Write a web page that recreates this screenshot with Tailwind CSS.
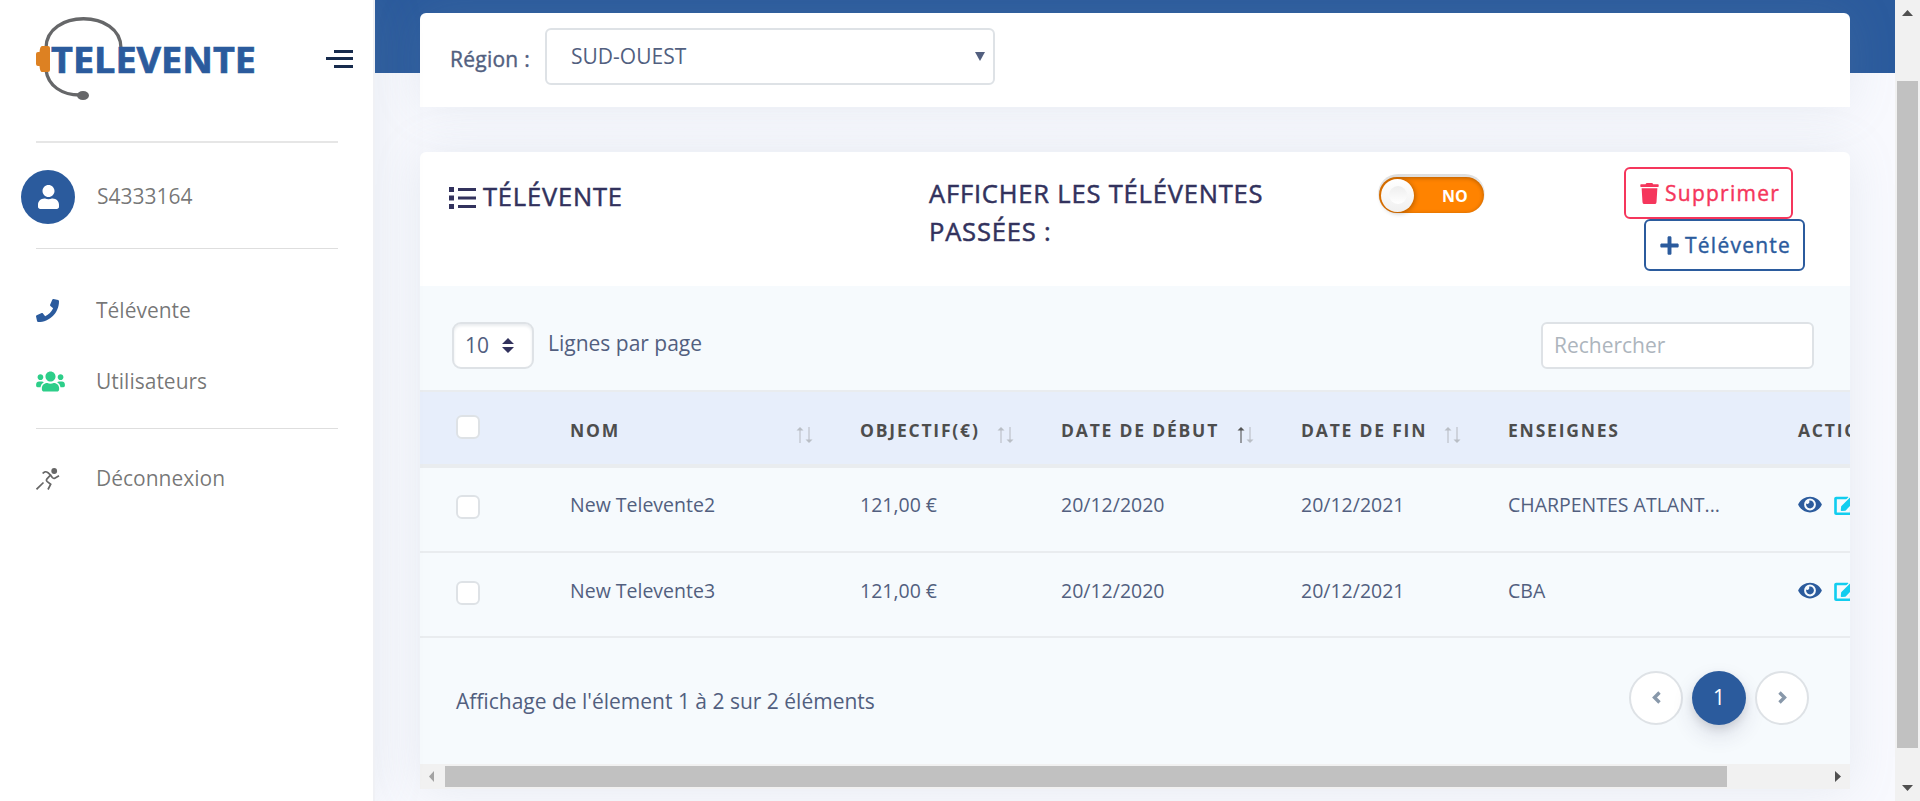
<!DOCTYPE html>
<html lang="fr">
<head>
<meta charset="utf-8">
<title>Télévente</title>
<script src="https://cdn.jsdelivr.net/npm/@tailwindcss/browser@4"></script>
</head>
<body class="h-[801px] w-[1920px] overflow-hidden bg-[#f8f9fe] font-['Open_Sans',sans-serif] text-[#525f7f]">
<svg class="hidden">
  <symbol id="eye" viewBox="0 0 576 512"><path d="M572.52 241.4C518.29 135.59 410.93 64 288 64S57.68 135.64 3.48 241.41a32.35 32.35 0 0 0 0 29.19C57.71 376.41 165.07 448 288 448s230.32-71.64 284.52-177.41a32.35 32.35 0 0 0 0-29.19zM288 400a144 144 0 1 1 144-144 143.93 143.93 0 0 1-144 144zm0-240a95.31 95.31 0 0 0-25.31 3.79 47.85 47.85 0 0 1-66.9 66.9A95.78 95.78 0 1 0 288 160z"/></symbol>
  <symbol id="edit" viewBox="0 0 576 512"><path d="M402.6 83.2l90.2 90.2c3.8 3.8 3.8 10 0 13.8L274.4 405.6l-92.8 10.3c-12.4 1.4-22.9-9.1-21.5-21.5l10.3-92.8L388.8 83.2c3.8-3.8 10-3.8 13.8 0zm162-22.9l-48.8-48.8c-15.2-15.2-39.9-15.2-55.2 0l-35.4 35.4c-3.8 3.8-3.8 10 0 13.8l90.2 90.2c3.8 3.8 10 3.8 13.8 0l35.4-35.4c15.2-15.3 15.2-40 0-55.2zM384 346.2V448H64V128h229.800c3.200 0 6.200-1.300 8.500-3.500l40-40c7.600-7.600 2.200-20.500-8.500-20.500H48C21.500 64 0 85.500 0 112v352c0 26.500 21.500 48 48 48h352c26.500 0 48-21.500 48-48V306.200c0-10.700-12.900-16-20.500-8.500l-40 40c-2.200 2.300-3.500 5.300-3.500 8.500z"/></symbol>
  <symbol id="up" viewBox="0 0 8 16"><path d="M3 2h2v14H3z" opacity=".55"/><path d="M4 0l3.500 3.500h-7z"/></symbol>
  <symbol id="down" viewBox="0 0 8 16"><path d="M3 0h2v14H3z" opacity=".55"/><path d="M4 16l3.500-3.500h-7z"/></symbol>
</svg>
<div class="flex h-full">
  <aside class="relative z-10 flex h-full w-[375px] shrink-0 flex-col border-r-2 border-[#f0f1f5] bg-white text-[21px] text-black/55 shadow-[0_0_48px_rgba(136,152,170,.15)]">
    <div class="flex h-[141px] items-start pl-9">
      <svg class="mt-[16px]" width="222" height="86" viewBox="36 16 222 86">
        <path d="M46 48C46 9 121 9 121 48M46 70C48 86 62 95 80 95" fill="none" stroke="#666769" stroke-width="3.300"/>
        <ellipse cx="83" cy="95.500" rx="6" ry="4.500" fill="#666769"/>
        <path d="M42 46h6q2 0 2 2v22q0 2-2 2h-6q-2 0-2.500-6h-1.500q-2 0-2-2V54q0-2 2-2h1.500q.5-6 2.500-6z" fill="#dd8122"/>
        <text x="51" y="72.500" textLength="205" lengthAdjust="spacingAndGlyphs" font-family="Open Sans" font-weight="700" font-size="36.500" fill="#2b5b9d" stroke="#2b5b9d" stroke-width=".7">TELEVENTE</text>
      </svg>
      <div class="mt-[50px] ml-[68px] flex w-[27px] flex-col items-end gap-[4px]">
        <i class="h-[3px] w-[19px] bg-[#172b4d]"></i><i class="h-[3px] w-[27px] bg-[#172b4d]"></i><i class="mt-[1px] h-[3px] w-[19px] bg-[#172b4d]"></i>
      </div>
    </div>
    <div class="mx-9 h-[2px] w-[302px] bg-[#e6e6e6]"></div>
    <div class="flex h-[105px] items-center pl-[21px]">
      <span class="mt-[3px] flex size-[54px] items-center justify-center rounded-full bg-[#2b5b9d]"><svg class="h-6 w-[21px] fill-white" viewBox="0 0 448 512"><path d="M224 256c70.700 0 128-57.300 128-128S294.700 0 224 0 96 57.300 96 128s57.300 128 128 128zm89.600 32h-16.700c-22.200 10.200-46.900 16-72.900 16s-50.600-5.800-72.900-16h-16.700C60.200 288 0 348.200 0 422.400V464c0 26.500 21.500 48 48 48h352c26.500 0 48-21.500 48-48v-41.600c0-74.200-60.200-134.400-134.400-134.400z"/></svg></span>
      <span class="mt-[2px] ml-[22px]">S4333164</span>
    </div>
    <div class="mx-9 h-px w-[302px] bg-[#dedede]"></div>
    <nav class="flex flex-col pt-[26px]">
      <a class="flex h-[71px] items-center pl-9"><svg class="size-[23px] fill-[#2b5b9d]" viewBox="0 0 512 512"><path d="M493.400 24.600l-104-24c-11.300-2.600-22.900 3.300-27.500 13.900l-48 112c-4.200 9.800-1.400 21.300 6.900 28l60.600 49.600c-36 76.700-98.900 140.500-177.200 177.200l-49.600-60.600c-6.800-8.300-18.200-11.100-28-6.900l-112 48C3.900 366.500-2 378.100.6 389.400l24 104C27.100 504.200 36.700 512 48 512c256.100 0 464-207.500 464-464 0-11.200-7.700-20.900-18.600-23.400z"/></svg><span class="ml-[37px]">Télévente</span></a>
      <a class="flex h-[71px] items-center pl-9"><svg class="h-[23px] w-[29px] fill-[#2dce89]" viewBox="0 0 640 512"><path d="M96 224c35.300 0 64-28.700 64-64s-28.700-64-64-64-64 28.700-64 64 28.700 64 64 64zm448 0c35.300 0 64-28.700 64-64s-28.700-64-64-64-64 28.700-64 64 28.700 64 64 64zm32 32h-64c-17.600 0-33.500 7.100-45.100 18.600 40.300 22.100 68.900 62 75.100 109.400h66c17.700 0 32-14.300 32-32v-32c0-35.300-28.700-64-64-64zm-256 0c61.900 0 112-50.100 112-112S381.900 32 320 32 208 82.100 208 144s50.100 112 112 112zm76.800 32h-8.300c-20.800 10-43.900 16-68.500 16s-47.600-6-68.500-16h-8.300C179.600 288 128 339.600 128 403.200V432c0 26.500 21.500 48 48 48h288c26.500 0 48-21.500 48-48v-28.800c0-63.600-51.600-115.200-115.200-115.200zm-223.700-13.400C161.500 263.100 145.600 256 128 256H64c-35.300 0-64 28.700-64 64v32c0 17.700 14.300 32 32 32h65.900c6.300-47.400 34.900-87.300 75.200-109.400z"/></svg><span class="ml-[31px]">Utilisateurs</span></a>
    </nav>
    <div class="mx-9 mt-[11px] h-px w-[302px] bg-[#dedede]"></div>
    <a class="mt-[14px] flex h-[72px] items-center pl-9"><svg class="h-[22px] w-[24px]" viewBox="0 0 24 22"><circle cx="18.200" cy="3" r="2.900" fill="#666"/><path d="M.5 21.300L7.500 14.500M6.700 5.500C8 3.500 10 3.200 12 4.700L14.500 7L11 10.800Q9.800 12.500 11.300 13.700L14.700 16.200L12 21.500M14.500 7L16.300 9.500Q17.300 10.700 18.800 10.200L23 7.700" fill="none" stroke="#666" stroke-width="1.700"/></svg><span class="ml-[36px]">Déconnexion</span></a>
  </aside>

  <main class="relative flex min-w-0 flex-1 flex-col bg-linear-to-b from-[#2b5b9d] from-[73px] to-[#f8f9fe] to-[73px] pt-[13px] pl-[45px]">
    <section class="flex h-[94px] w-[1430px] shrink-0 items-start rounded-t-[6px] bg-white pl-[30px] shadow-[0_0_48px_rgba(136,152,170,.15)]">
      <label class="mt-[31px] w-[95px] text-[21px] leading-[30px] tracking-[.25px] [-webkit-text-stroke:.4px]">Région :</label>
      <div class="mt-[15px] flex h-[57px] w-[450px] items-center justify-between rounded-[6px] border-2 border-[#dee2e6] bg-white pr-[8px] pl-6 text-[21px]"><span>SUD-OUEST</span><svg class="h-[9px] w-[10px] fill-[#525f7f]" viewBox="0 0 10 9"><path d="M0 0h10L5 9z"/></svg></div>
    </section>

    <section class="mt-[45px] flex h-[637px] w-[1430px] shrink-0 flex-col overflow-hidden rounded-t-[6px] bg-white shadow-[0_0_48px_rgba(136,152,170,.15)]">
      <header class="flex h-[134px] shrink-0 text-[25.500px] leading-[38px] tracking-[.820px] text-[#32325d] [-webkit-text-stroke:.5px]">
        <div class="mt-[25px] flex w-[509px] items-start pl-[29px]"><svg class="mt-[10px] h-[22px] w-[27px] fill-[#32325d]" viewBox="0 0 27 22"><path d="M0 0h5v5H0zM0 8.500h5v5H0zM0 17h5v5H0zM9 1h18v3H9zM9 9.500h18v3H9zM9 18h18v3H9z" stroke="none"/></svg><h2 class="ml-[7px]">TÉLÉVENTE</h2></div>
        <h2 class="mt-[22px] w-[449px]">AFFICHER LES TÉLÉVENTES<br>PASSÉES :</h2>
        <div class="mt-[22px] flex h-[40px] w-[107px] items-center rounded-full bg-linear-to-b from-[#dedede] to-white px-px pt-[3px] pb-px tracking-normal [-webkit-text-stroke:0]"><div class="flex h-[36px] w-full items-center rounded-full bg-[#ff8300] pl-[2px] shadow-[inset_0_1px_4px_rgba(0,0,0,.3)]"><span class="flex size-[33px] items-center justify-center rounded-full bg-linear-to-b from-white to-[#f0f0f0] shadow-[1px_1px_5px_rgba(0,0,0,.3)]"><i class="size-[18px] rounded-full bg-linear-to-b from-[#eee] to-white"></i></span><b class="mt-[2px] ml-[28px] text-[16px] leading-5 font-bold text-white">NO</b></div></div>
        <div class="mt-[15px] flex flex-1 flex-col items-end pr-[45px] text-[21px] tracking-[1.250px] [-webkit-text-stroke:.4px]">
          <button class="mr-[12px] flex h-[52px] w-[169px] items-center rounded-[6px] border-2 border-[#f5365c] pl-[14px] text-[#f5365c]"><svg class="h-[21px] w-[19px] fill-current" viewBox="0 0 448 512"><path stroke="none" d="M432 32H312l-9.400-18.700A24 24 0 0 0 289.100 0H158.800a23.720 23.720 0 0 0-21.400 13.300L128 32H16A16 16 0 0 0 0 48v32a16 16 0 0 0 16 16h416a16 16 0 0 0 16-16V48a16 16 0 0 0-16-16zM53.200 467a48 48 0 0 0 47.900 45h245.800a48 48 0 0 0 47.900-45L416 128H32z"/></svg><span class="mb-px ml-[6px]">Supprimer</span></button>
          <button class="flex h-[52px] w-[161px] items-center rounded-[6px] border-2 border-[#2b5b9d] pl-[14px] text-[#2b5b9d]"><svg class="h-[21px] w-[19px] fill-current" viewBox="0 0 448 512"><path stroke="none" d="M416 208H272V64c0-17.670-14.330-32-32-32h-32c-17.670 0-32 14.330-32 32v144H32c-17.670 0-32 14.330-32 32v32c0 17.670 14.330 32 32 32h144v144c0 17.670 14.330 32 32 32h32c17.670 0 32-14.330 32-32V304h144c17.670 0 32-14.330 32-32v-32c0-17.670-14.330-32-32-32z"/></svg><span class="mb-px ml-[6px]">Télévente</span></button>
        </div>
      </header>

      <div class="flex h-[478px] shrink-0 flex-col bg-[#f6fafd]">
        <div class="flex h-[104px] shrink-0 items-start pt-[36px] pr-[36px] pl-[32px] text-[21px]">
          <div class="flex h-[47px] w-[82px] items-center rounded-[9px] border-2 border-[#dee2e6] bg-white pl-[11px] shadow-[inset_0_2px_3px_#e9ecef]"><span>10</span><svg class="ml-[13px] h-[15px] w-[12px] fill-[#32325d]" viewBox="0 0 12 15"><path d="M0 6L6 0l6 6zM0 9h12l-6 6z"/></svg></div>
          <span class="ml-[14px] leading-[42px]">Lignes par page</span>
          <div class="ml-auto flex h-[47px] w-[273px] items-center rounded-[6px] border-2 border-[#dee2e6] bg-white pl-[11px] text-[#adb5bd]">Rechercher</div>
        </div>
        <table class="w-[1510px] shrink-0 table-fixed border-collapse text-left text-[19.500px]">
          <colgroup><col class="w-[150px]"><col class="w-[290px]"><col class="w-[201px]"><col class="w-[240px]"><col class="w-[207px]"><col class="w-[290px]"><col class="w-[132px]"></colgroup>
          <thead>
            <tr class="h-[75px] border-t-2 border-b-4 border-[#e9ecef] bg-[#e7eefb] text-[17.500px] tracking-[1.800px] text-[#4d4d4d]">
              <th class="pl-[36px] align-top"><i class="mt-[23px] block size-6 rounded-[6px] border-2 border-[#dee2e6] bg-white"></i></th>
              <th><div class="flex items-center pt-[5px]">NOM<span class="mt-2 mr-[47px] ml-auto flex gap-px fill-[#b9bec5]"><svg class="h-4 w-2"><use href="#up"/></svg><svg class="h-4 w-2"><use href="#down"/></svg></span></div></th>
              <th><div class="flex items-center pt-[5px]">OBJECTIF(€)<span class="mt-2 mr-[47px] ml-auto flex gap-px fill-[#b9bec5]"><svg class="h-4 w-2"><use href="#up"/></svg><svg class="h-4 w-2"><use href="#down"/></svg></span></div></th>
              <th><div class="flex items-center pt-[5px]">DATE DE DÉBUT<span class="mt-2 mr-[47px] ml-auto flex gap-px fill-[#b9bec5]"><svg class="h-4 w-2 fill-[#555]"><use href="#up"/></svg><svg class="h-4 w-2"><use href="#down"/></svg></span></div></th>
              <th><div class="flex items-center pt-[5px]">DATE DE FIN<span class="mt-2 mr-[47px] ml-auto flex gap-px fill-[#b9bec5]"><svg class="h-4 w-2"><use href="#up"/></svg><svg class="h-4 w-2"><use href="#down"/></svg></span></div></th>
              <th><div class="pt-[5px]">ENSEIGNES</div></th>
              <th><div class="pt-[5px]">ACTIONS</div></th>
            </tr>
          </thead>
          <tbody>
            <tr class="h-[86px] border-b-2 border-[#e9ecef]">
              <td class="pb-[5px] pl-[36px]"><i class="block size-6 rounded-[6px] border-2 border-[#dee2e6] bg-white"></i></td>
              <td class="pb-[10px]">New Televente2</td><td class="pb-[10px]">121,00 €</td><td class="pb-[10px]">20/12/2020</td><td class="pb-[10px]">20/12/2021</td><td class="pb-[10px]">CHARPENTES ATLANT...</td>
              <td><div class="flex items-center gap-3 pb-[11px]"><svg class="h-[21px] w-6 fill-[#2b5b9d]"><use href="#eye"/></svg><svg class="h-[21px] w-6 fill-[#11cdef]"><use href="#edit"/></svg></div></td>
            </tr>
            <tr class="h-[85px] border-b-2 border-[#e9ecef]">
              <td class="pb-[3px] pl-[36px]"><i class="block size-6 rounded-[6px] border-2 border-[#dee2e6] bg-white"></i></td>
              <td class="pb-[8px]">New Televente3</td><td class="pb-[8px]">121,00 €</td><td class="pb-[8px]">20/12/2020</td><td class="pb-[8px]">20/12/2021</td><td class="pb-[8px]">CBA</td>
              <td><div class="flex items-center gap-3 pb-[9px]"><svg class="h-[21px] w-6 fill-[#2b5b9d]"><use href="#eye"/></svg><svg class="h-[21px] w-6 fill-[#11cdef]"><use href="#edit"/></svg></div></td>
            </tr>
          </tbody>
        </table>
        <div class="flex items-start justify-between pt-[33px] pr-[41px] pl-[36px] text-[21px]">
          <span class="mt-[15px]">Affichage de l'élement 1 à 2 sur 2 éléments</span>
          <div class="flex gap-[9px]">
            <span class="flex size-[54px] items-center justify-center rounded-full border-2 border-[#dee2e6] bg-white"><svg class="mb-[2px] h-[13px] w-[9px]" viewBox="0 0 9 13"><path d="M7.500 1.500l-5 5 5 5" fill="none" stroke="#8898aa" stroke-width="3.400"/></svg></span>
            <span class="flex size-[54px] items-center justify-center rounded-full bg-[#2b5b9d] text-white shadow-[0_10px_21px_rgba(50,50,93,.14),0_4px_9px_rgba(0,0,0,.1)]">1</span>
            <span class="flex size-[54px] items-center justify-center rounded-full border-2 border-[#dee2e6] bg-white"><svg class="mb-[2px] h-[13px] w-[9px]" viewBox="0 0 9 13"><path d="M1.500 1.500l5 5-5 5" fill="none" stroke="#8898aa" stroke-width="3.400"/></svg></span>
          </div>
        </div>
      </div>
      <div class="flex h-[25px] shrink-0 items-center bg-[#f1f1f1]">
        <svg class="mr-[11px] ml-[9px] h-[11px] w-[5px] fill-[#a3a3a3]" viewBox="0 0 5 11"><path d="M5 0v11L0 5.500z"/></svg>
        <i class="h-[21px] w-[1282px] bg-[#c1c1c1]"></i>
        <svg class="mr-[9px] ml-auto h-[11px] w-[6px] fill-[#505050]" viewBox="0 0 6 11"><path d="M0 0v11l6-5.500z"/></svg>
      </div>
    </section>
  </main>

  <div class="z-10 flex w-[25px] shrink-0 flex-col items-center bg-[#f1f1f1]">
    <svg class="mt-[10px] h-[6px] w-[11px] fill-[#505050]" viewBox="0 0 11 6"><path d="M0 6h11L5.500 0z"/></svg>
    <i class="mt-[65px] h-[667px] w-[21px] bg-[#c1c1c1]"></i>
    <svg class="mt-[37px] h-[6px] w-[11px] fill-[#505050]" viewBox="0 0 11 6"><path d="M0 0h11L5.500 6z"/></svg>
  </div>
</div>
</body>
</html>
